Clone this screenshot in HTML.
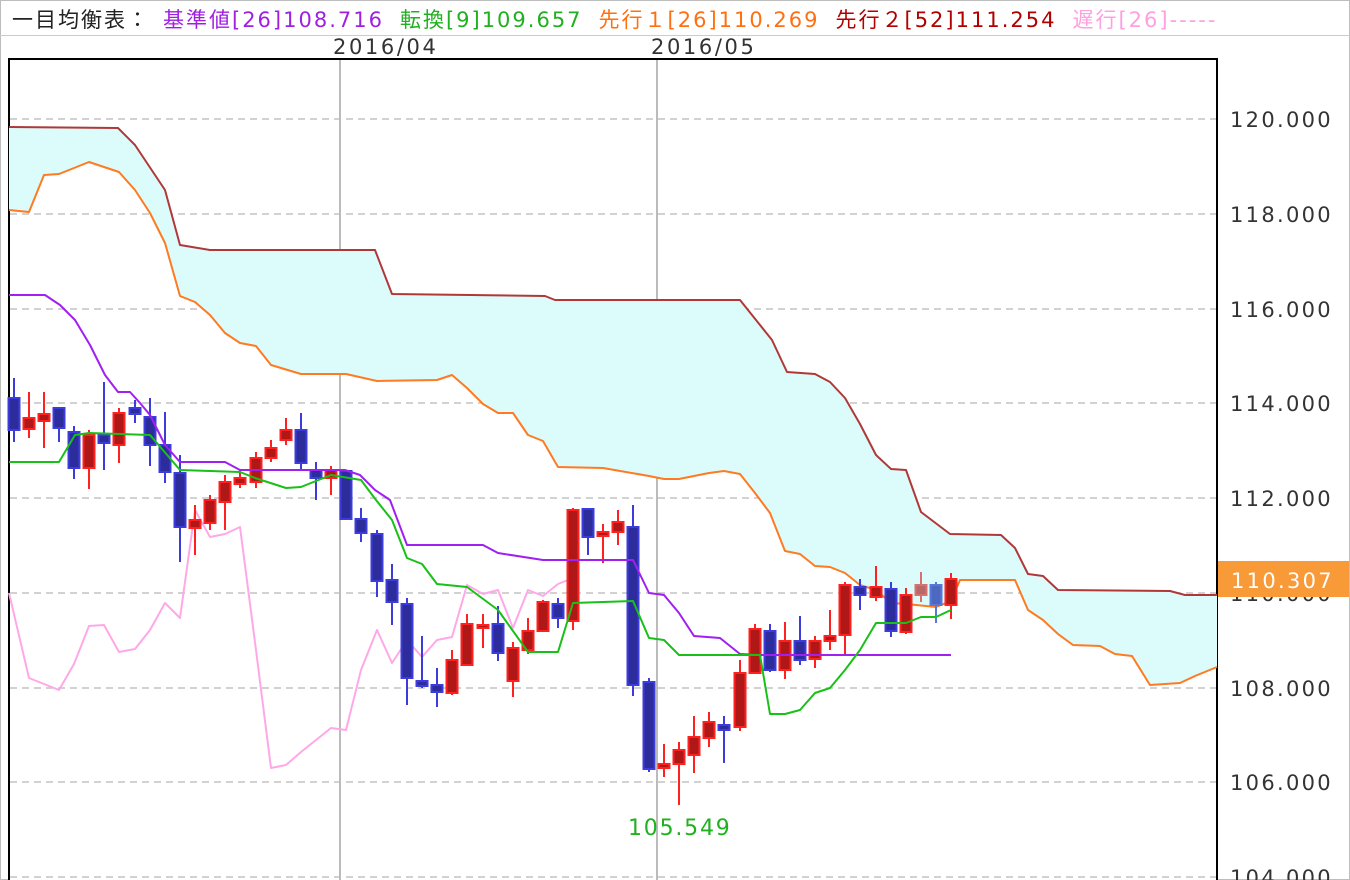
<!DOCTYPE html>
<html><head><meta charset="utf-8"><style>
html,body{margin:0;padding:0;background:#fff;}
body{width:1350px;height:880px;overflow:hidden;position:relative;font-family:"DejaVu Sans","Noto Sans CJK JP",sans-serif;}
.frame{position:absolute;left:0;top:0;width:1348px;height:878px;border:1px solid #bdbdbd;}
.leg{position:absolute;left:12px;top:4px;font-size:21px;white-space:nowrap;letter-spacing:2px;}
.leg span{margin-right:16px;}
.ax{position:absolute;font-size:21px;color:#333;letter-spacing:2.6px;}
</style></head><body>
<div class="frame"></div>
<div class="leg"><span style="color:#222;margin-right:13px">一目均衡表：</span><span style="color:#a020e0">基準値[26]108.716</span><span style="color:#20b020">転換[9]109.657</span><span style="color:#ff7010">先行１[26]110.269</span><span style="color:#b00000">先行２[52]111.254</span><span style="color:#ffa0e0">遅行[26]-----</span></div>
<div style="position:absolute;left:0;top:35px;width:1350px;height:1px;background:#ccc"></div>
<div class="ax" style="left:333px;top:35px;">2016/04</div>
<div class="ax" style="left:651px;top:35px;">2016/05</div>
<svg width="1350" height="880" style="position:absolute;left:0;top:0">
<rect x="9" y="59" width="1208" height="830" fill="#fff" stroke="#000" stroke-width="2"/>
<g stroke="#c4c4c4" stroke-width="1.5" stroke-dasharray="7,5">
<line x1="10" x2="1216" y1="119" y2="119"/><line x1="10" x2="1216" y1="214" y2="214"/><line x1="10" x2="1216" y1="309" y2="309"/><line x1="10" x2="1216" y1="403" y2="403"/><line x1="10" x2="1216" y1="498" y2="498"/><line x1="10" x2="1216" y1="593" y2="593"/><line x1="10" x2="1216" y1="688" y2="688"/><line x1="10" x2="1216" y1="782" y2="782"/><line x1="10" x2="1216" y1="877" y2="877"/>
</g>
<line x1="340" x2="340" y1="60" y2="880" stroke="#bbb" stroke-width="2"/>
<line x1="657" x2="657" y1="60" y2="880" stroke="#bbb" stroke-width="2"/>
<polygon fill="#dcfcfc" points="9,127 118,128 135,145 165,190 180,245 210,250 375,250 392,294 545,296 555,300 740,300 760,325 772,340 787,372 815,374 830,382 845,398 860,424 876,455 891,469 906,470 921,512 950,534 1001,535 1015,548 1028,574 1043,576 1058,590 1170,591 1185,595 1217,595 1217,667 1195,676 1180,683 1150,685 1132,656 1115,654 1100,646 1073,645 1058,634 1043,620 1028,610 1015,580 960,580 951,601 936,607 906,604 891,603 876,590 860,585 845,573 830,567 815,566 800,554 785,551 770,513 755,493 740,474 724,471 709,473 679,479 664,479 649,476 603,468 558,467 543,441 528,435 513,413 498,413 483,404 467,388 452,375 437,380 377,381 346,374 301,374 271,365 256,346 240,343 225,333 210,315 195,302 180,296 165,243 150,213 135,190 119,172 89,162 59,174 44,175 29,212 9,210"/>
<g fill="none" stroke-width="2" stroke-linejoin="round">
<polyline stroke="#b03838" points="9,127 118,128 135,145 165,190 180,245 210,250 375,250 392,294 545,296 555,300 740,300 760,325 772,340 787,372 815,374 830,382 845,398 860,424 876,455 891,469 906,470 921,512 950,534 1001,535 1015,548 1028,574 1043,576 1058,590 1170,591 1185,595 1217,595"/>
<polyline stroke="#ff7a20" points="9,210 29,212 44,175 59,174 89,162 119,172 135,190 150,213 165,243 180,296 195,302 210,315 225,333 240,343 256,346 271,365 301,374 346,374 377,381 437,380 452,375 467,388 483,404 498,413 513,413 528,435 543,441 558,467 603,468 649,476 664,479 679,479 709,473 724,471 740,474 755,493 770,513 785,551 800,554 815,566 830,567 845,573 860,585 876,590 891,603 906,604 936,607 951,601 960,580 1015,580 1028,610 1043,620 1058,634 1073,645 1100,646 1115,654 1132,656 1150,685 1180,683 1195,676 1217,667"/>
<polyline stroke="#ffa8e8" points="9,593 29,678 59,690 74,664 89,626 104,625 119,652 135,649 150,630 165,603 180,618 195,510 210,537 225,534 240,527 256,650 271,768 286,765 301,752 316,740 331,728 346,730 361,670 377,630 392,663 407,640 422,657 437,640 452,637 467,585 483,594 498,590 513,628 528,590 543,596 558,584 573,578"/>
</g>
<g stroke-width="2">
<g stroke="#ff2020" fill="#b01818">
<line x1="29" x2="29" y1="392" y2="438"/><rect x="23.5" y="418" width="11" height="11"/>
<line x1="44" x2="44" y1="392" y2="448"/><rect x="38.5" y="414" width="11" height="7"/>
<line x1="89" x2="89" y1="430" y2="489"/><rect x="83.5" y="435" width="11" height="33"/>
<line x1="119" x2="119" y1="408" y2="463"/><rect x="113.5" y="413" width="11" height="32"/>
<line x1="195" x2="195" y1="505" y2="555"/><rect x="189.5" y="520" width="11" height="8"/>
<line x1="210" x2="210" y1="495" y2="530"/><rect x="204.5" y="500" width="11" height="23"/>
<line x1="225" x2="225" y1="475" y2="530"/><rect x="219.5" y="482" width="11" height="20"/>
<line x1="240" x2="240" y1="470" y2="488"/><rect x="234.5" y="478" width="11" height="6"/>
<line x1="256" x2="256" y1="452" y2="488"/><rect x="250.5" y="458" width="11" height="24"/>
<line x1="271" x2="271" y1="440" y2="462"/><rect x="265.5" y="448" width="11" height="10"/>
<line x1="286" x2="286" y1="418" y2="445"/><rect x="280.5" y="430" width="11" height="10"/>
<line x1="331" x2="331" y1="466" y2="495"/><rect x="325.5" y="470" width="11" height="8"/>
<line x1="452" x2="452" y1="650" y2="695"/><rect x="446.5" y="660" width="11" height="33"/>
<line x1="467" x2="467" y1="614" y2="665"/><rect x="461.5" y="624" width="11" height="41"/>
<line x1="483" x2="483" y1="614" y2="648"/><rect x="477.5" y="625" width="11" height="3"/>
<line x1="513" x2="513" y1="642" y2="697"/><rect x="507.5" y="648" width="11" height="33"/>
<line x1="528" x2="528" y1="618" y2="654"/><rect x="522.5" y="631" width="11" height="19"/>
<line x1="543" x2="543" y1="600" y2="631"/><rect x="537.5" y="602" width="11" height="29"/>
<line x1="573" x2="573" y1="508" y2="630"/><rect x="567.5" y="510" width="11" height="111"/>
<line x1="603" x2="603" y1="524" y2="563"/><rect x="597.5" y="532" width="11" height="4"/>
<line x1="618" x2="618" y1="510" y2="545"/><rect x="612.5" y="522" width="11" height="10"/>
<line x1="664" x2="664" y1="744" y2="777"/><rect x="658.5" y="764" width="11" height="4"/>
<line x1="679" x2="679" y1="742" y2="805"/><rect x="673.5" y="750" width="11" height="14"/>
<line x1="694" x2="694" y1="716" y2="773"/><rect x="688.5" y="737" width="11" height="18"/>
<line x1="709" x2="709" y1="712" y2="747"/><rect x="703.5" y="722" width="11" height="16"/>
<line x1="740" x2="740" y1="660" y2="731"/><rect x="734.5" y="673" width="11" height="54"/>
<line x1="755" x2="755" y1="624" y2="674"/><rect x="749.5" y="629" width="11" height="44"/>
<line x1="785" x2="785" y1="622" y2="679"/><rect x="779.5" y="641" width="11" height="29"/>
<line x1="815" x2="815" y1="636" y2="668"/><rect x="809.5" y="641" width="11" height="18"/>
<line x1="830" x2="830" y1="610" y2="650"/><rect x="824.5" y="636" width="11" height="5"/>
<line x1="845" x2="845" y1="582" y2="655"/><rect x="839.5" y="585" width="11" height="50"/>
<line x1="876" x2="876" y1="566" y2="601"/><rect x="870.5" y="587" width="11" height="10"/>
<line x1="906" x2="906" y1="588" y2="634"/><rect x="900.5" y="595" width="11" height="37"/>
<line x1="951" x2="951" y1="573" y2="619"/><rect x="945.5" y="579" width="11" height="26"/>
</g>
<g stroke="#d87070" fill="#b86868"><line x1="921" x2="921" y1="572" y2="602"/><rect x="915.5" y="585" width="11" height="10"/></g>
<g stroke="#3c3cdc" fill="#2c2c9c">
<line x1="14" x2="14" y1="378" y2="442"/><rect x="8.5" y="398" width="11" height="32"/>
<line x1="59" x2="59" y1="408" y2="442"/><rect x="53.5" y="408" width="11" height="20"/>
<line x1="74" x2="74" y1="426" y2="479"/><rect x="68.5" y="432" width="11" height="36"/>
<line x1="104" x2="104" y1="382" y2="470"/><rect x="98.5" y="435" width="11" height="8"/>
<line x1="135" x2="135" y1="400" y2="423"/><rect x="129.5" y="408" width="11" height="6"/>
<line x1="150" x2="150" y1="398" y2="466"/><rect x="144.5" y="417" width="11" height="28"/>
<line x1="165" x2="165" y1="412" y2="483"/><rect x="159.5" y="445" width="11" height="27"/>
<line x1="180" x2="180" y1="455" y2="562"/><rect x="174.5" y="473" width="11" height="54"/>
<line x1="301" x2="301" y1="413" y2="470"/><rect x="295.5" y="430" width="11" height="33"/>
<line x1="316" x2="316" y1="462" y2="500"/><rect x="310.5" y="470" width="11" height="8"/>
<line x1="346" x2="346" y1="471" y2="519"/><rect x="340.5" y="471" width="11" height="48"/>
<line x1="361" x2="361" y1="508" y2="542"/><rect x="355.5" y="519" width="11" height="14"/>
<line x1="377" x2="377" y1="530" y2="597"/><rect x="371.5" y="534" width="11" height="47"/>
<line x1="392" x2="392" y1="564" y2="625"/><rect x="386.5" y="580" width="11" height="22"/>
<line x1="407" x2="407" y1="598" y2="705"/><rect x="401.5" y="604" width="11" height="74"/>
<line x1="422" x2="422" y1="636" y2="688"/><rect x="416.5" y="681" width="11" height="5"/>
<line x1="437" x2="437" y1="668" y2="707"/><rect x="431.5" y="685" width="11" height="7"/>
<line x1="498" x2="498" y1="606" y2="661"/><rect x="492.5" y="624" width="11" height="29"/>
<line x1="558" x2="558" y1="598" y2="628"/><rect x="552.5" y="604" width="11" height="14"/>
<line x1="588" x2="588" y1="509" y2="555"/><rect x="582.5" y="509" width="11" height="28"/>
<line x1="633" x2="633" y1="505" y2="696"/><rect x="627.5" y="527" width="11" height="158"/>
<line x1="649" x2="649" y1="678" y2="772"/><rect x="643.5" y="682" width="11" height="87"/>
<line x1="724" x2="724" y1="716" y2="763"/><rect x="718.5" y="725" width="11" height="5"/>
<line x1="770" x2="770" y1="624" y2="672"/><rect x="764.5" y="631" width="11" height="39"/>
<line x1="800" x2="800" y1="616" y2="665"/><rect x="794.5" y="641" width="11" height="19"/>
<line x1="860" x2="860" y1="579" y2="610"/><rect x="854.5" y="587" width="11" height="8"/>
<line x1="891" x2="891" y1="582" y2="637"/><rect x="885.5" y="589" width="11" height="42"/>
</g>
<g stroke="#5878d8" fill="#4c68c0"><line x1="936" x2="936" y1="582" y2="623"/><rect x="930.5" y="585" width="11" height="20"/></g>
</g>
<g fill="none" stroke-width="2" stroke-linejoin="round">
<polyline stroke="#a020f0" points="9,295 45,295 60,305 75,320 90,345 105,375 118,392 130,392 140,403 150,415 165,445 180,462 225,462 240,470 345,470 360,475 375,490 390,500 407,545 483,545 498,553 543,560 633,560 649,593 664,595 679,613 694,636 720,638 740,654 760,655 951,655"/>
<polyline stroke="#18c018" points="9,462 59,462 75,435 89,433 150,435 180,470 240,472 255,478 286,488 301,487 331,475 361,480 376,500 392,520 407,558 422,564 437,584 467,587 498,610 528,652 558,652 573,603 633,601 649,638 664,640 679,655 760,655 770,714 785,714 800,710 815,693 830,688 845,670 860,650 876,623 906,623 921,617 936,617 951,610"/>
</g>
<text x="628" y="835" font-size="22" fill="#20b020" font-family="DejaVu Sans, sans-serif" letter-spacing="1.8">105.549</text>
<g font-size="21" fill="#333" font-family="DejaVu Sans, sans-serif" letter-spacing="2.3">
<text x="1230" y="127">120.000</text><text x="1230" y="222">118.000</text><text x="1230" y="317">116.000</text><text x="1230" y="411">114.000</text><text x="1230" y="506">112.000</text><text x="1230" y="601">110.000</text><text x="1230" y="696">108.000</text><text x="1230" y="790">106.000</text><text x="1230" y="885">104.000</text>
</g>
<rect x="1218" y="561" width="131" height="36" fill="#f89a38"/>
<text x="1231" y="588" font-size="21" fill="#fff" font-family="DejaVu Sans, sans-serif" letter-spacing="2.3">110.307</text>
</svg>
</body></html>
